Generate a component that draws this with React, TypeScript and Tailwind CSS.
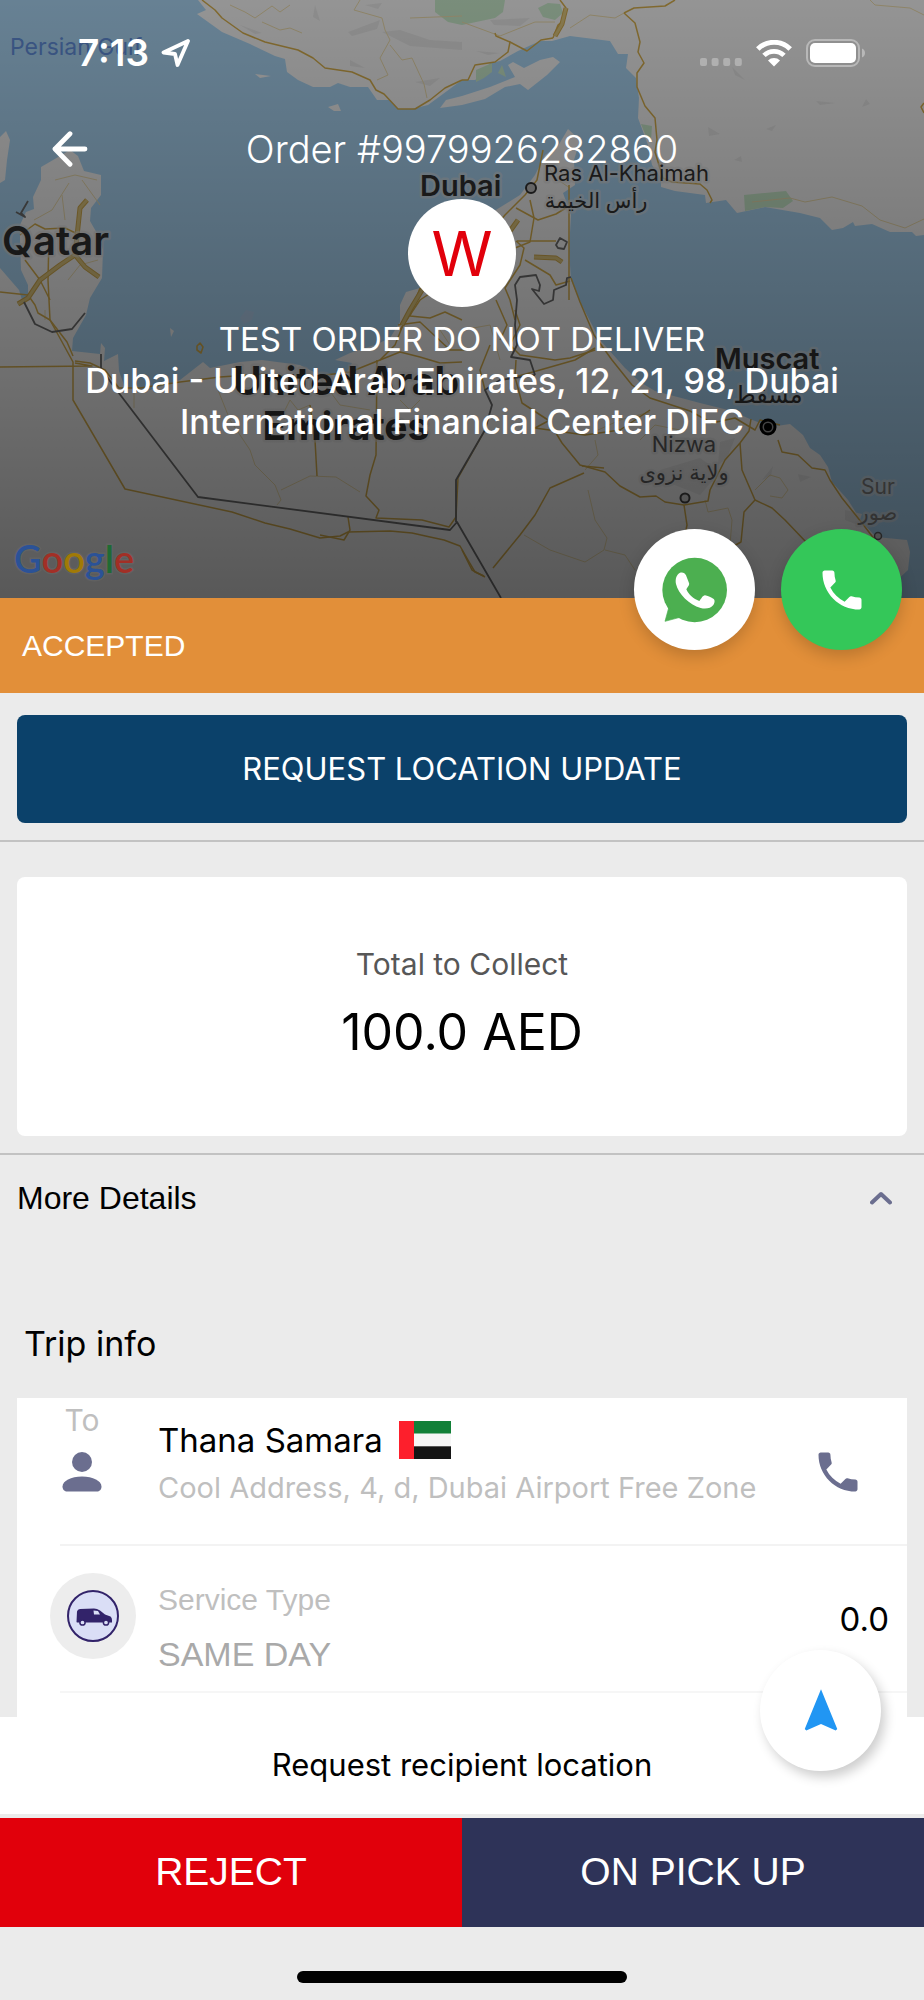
import React from "react";
import { MdPhone, MdNavigation } from "react-icons/md";

const sans = "font-['Inter','Noto_Sans',sans-serif]";
const helv = "font-['Liberation_Sans',Arial,sans-serif]";

const LAND = [
  // Iran and Pakistan coast
  "M198 0L206 10L197 14L222 32L250 44L275 56L285 59L287 72L298 80L313 87H330L338 83L350 87H368L377 100H390L398 109H412L428 105L462 80H475L483 75L490 63L500 61L518 51L540 41H552L570 36L610 41L618 54H628L626 68L636 78L639 98L638 118L648 145L652 165L661 178V187L675 191L705 195L706 203L726 200L737 213L765 207L800 213L820 218L832 230L843 228L853 222L855 226L872 224L890 232H912L916 236L924 235V0Z",
  "M462 96L490 87L515 77L508 65L513 62L524 68L540 60L553 57L560 62L547 75L528 90L520 84L505 87L485 99L462 105L440 108L446 100Z",
  "M255 74L271 76L260 78Z",
  "M328 107L338 104L341 111L334 111Z",
  "M0 137L6 131L10 140L7 160L5 180L0 183Z",
  // Arabian peninsula
  "M0 268L19 290L22 300H28L28 285L21 270L20 240L20 225L26 212L34 209L33 197L41 180V167L60 156L70 150L78 156L84 171L101 175V195L91 208L90 221L98 235L103 250L102 278L90 298L86 315L73 338L72 351L100 354L101 343L105 348L104 361L118 354L119 371L125 388L150 390L180 380L203 362L210 368L240 362L262 360L300 365L320 375L345 375L352 363L335 360L350 353L375 345L390 338L400 322V305L406 292L420 288L440 262L480 220L499 208L520 195L535 175L545 155L558 146L568 129L580 140L574 160L575 185L563 193L571 215L569 250L571 280L580 302L600 340L625 368L640 382L655 391L700 403L732 411L750 419L770 427L790 424L803 435L810 448L820 455L828 467L832 482L848 500L862 522L876 537L907 540L910 552L908 570L895 582V598H0Z",
];

const GREENS = [
  "M435 0V12L448 22L462 25L495 18L503 12L505 0Z",
  "M538 8L548 3L560 4L563 13L555 20L543 17Z",
  "M476 70L492 63V72L484 78L476 82Z",
  "M498 73L502 65L506 77Z",
  "M744 195L786 191L793 201L783 208L765 207L745 211Z",
  "M641 124L652 126L651 140L645 134Z",
];

const RELIEF = [
  "M365 5L382 3L378 9Z", "M382 32L400 30L430 40L462 42V50L410 46Z", "M348 32L380 20L377 29L352 36Z",
  "M315 5L320 21L313 17Z", "M240 25L262 33L255 34Z", "M350 60L365 68L350 66Z", "M490 20L530 18L520 26L494 25Z",
  "M476 51L500 53L488 55Z", "M732 67L745 80L735 75Z", "M816 101L836 103L820 105Z", "M862 107L866 99L870 104Z",
  "M708 127L720 134L709 136Z", "M766 129L776 125L772 131Z", "M734 160L741 156L742 162Z", "M720 442L735 438L727 458L718 465Z",
  "M660 470L700 458L720 472L700 495L662 480Z", "M762 480L773 466L771 476Z", "M798 474L811 477L800 482Z",
  "M845 510L862 514L858 525L845 520Z", "M415 82L440 78L430 86Z",
];

const ROADS = [
  "M202 0L215 10L222 18L243 33L265 42L298 50L313 58L325 68L352 72L370 80L376 90L384 94L398 109H415L430 100L445 88L462 80",
  "M462 80H468L475 65L495 62L508 52L510 42L496 36L495 33",
  "M510 42L527 51L541 40L553 38", "M560 0L566 8L564 20L558 25L553 38",
  "M624 13L635 23L640 42L638 52L644 63L637 73V87L645 106L655 118L657 140L655 152L663 178L672 182L700 184L707 190L712 200L710 203",
  "M624 13L634 8L665 6L675 0", "M924 103L921 107L924 113",
  "M0 292L28 295L35 305L38 313L50 320L73 362V400L125 489L232 512L265 523L290 529L320 538L340 536L348 532L390 531L412 533L430 537L444 540L460 546L468 560L475 572L484 576",
  "M0 367L92 366L75 363", "M75 361L90 363L105 370L119 388L140 388L180 382L220 377L262 374L300 378L350 372L380 360L400 352L420 357L440 363L462 362",
  "M49 235L48 280L50 320L67 342L73 356", "M310 405L315 440L317 476", "M377 360L376 455L370 475L366 496L379 510L376 518L422 520L449 527L456 517L458 478L485 430",
  "M348 517L350 530L344 540L320 535", "M420 288L410 316L430 318L445 312L462 320", "M398 325L420 322L450 350L470 350",
  "M420 290L405 320L395 345L380 360", "M543 150L537 180L525 195L505 215L480 245L450 280L420 300L400 330",
  "M569 185V300", "M530 200L534 218L530 242L515 248", "M517 241H556M516 241L524 248L520 265L505 288L510 300L515 320",
  "M516 208L538 220L556 214L569 206", "M525 260L550 275L556 285L570 281",
  "M571 278L580 302L594 335L612 360L632 385L650 398L690 411L712 423L735 418L755 430L760 420L780 425",
  "M516 360L515 377L540 370L575 360L595 348", "M515 377L522 403L548 420L562 443L580 465L605 472L620 486L640 497L656 496L665 502L684 505L708 501L710 490L725 460L740 443L749 431L751 419",
  "M550 420L535 428L585 435L620 430L650 410", "M584 473L550 488L535 515L520 535L493 568", "M582 466L604 468",
  "M684 505L687 525L683 545", "M740 443L742 470L755 500L744 512L741 542L730 548", "M755 500L772 508L785 520L806 542",
  "M778 440L782 452L798 455L812 468L825 470L830 480L842 498L862 523L875 540", "M462 550L472 570L485 577",
  "M515 310L520 325L510 345L520 355L555 360L570 358L595 350", "M496 300L507 325L500 340", "M490 345L480 370L485 390",
  "M20 235L35 224L45 229L65 228L90 240", "M25 260L40 280L50 300",
];

const HIGHWAYS = [
  "M87 200L80 208L75 255L60 265L40 280L28 298L18 304", "M75 255L85 267L99 277", "M425 285L410 310L402 325",
  "M534 257L556 258L562 262", "M566 8L562 24L555 36", "M518 220L500 245L480 270",
];

const MINOR = [
  "M230 5L245 12L255 18L272 6L280 12L290 5", "M262 22L280 30L290 28L302 33", "M360 0L354 10L382 18L385 30L390 40L380 58L388 75L377 80",
  "M390 45L402 60L412 58L424 84L427 98", "M410 18L462 16", "M570 28L590 15L615 18L624 13", "M462 22L500 36L535 22L555 22",
  "M752 202L790 198L805 202L832 197L862 206L880 220L905 228L924 219", "M870 0L875 5L910 8L924 15",
  "M218 390L230 420L250 450L255 465L275 485L281 500L277 505", "M281 490L310 476L336 477L360 492", "M310 405L298 410L290 400L280 420",
  "M55 180L75 175L97 180M69 183L52 210L34 220M62 195L65 220M82 180L100 205M45 310V320",
  "M524 535L550 550L585 562L604 550L607 538L595 520L588 490", "M605 550L625 555L635 570", "M595 440L598 455L585 470",
  "M598 430L620 420L650 412", "M640 440L655 425L680 430", "M705 500L708 512L728 508L732 520L730 545", "M755 490L770 475L780 478L788 490L782 498L770 496",
  "M134 388V408", "M68 280L80 265L98 260", "M320 378L340 405L370 410", "M420 400L410 410L400 400",
  "M462 330L490 325L500 360M440 330L450 345M545 160L555 178L570 188",
];

const BORDERS = [
  "M24 302L35 324L52 332L72 329L85 313", "M101 354V368L112 384L198 497L450 530L457 522L501 598", "M456 522V480L485 430L492 405L485 390L500 380L535 375",
  "M535 375L530 360L511 357L517 345L515 325L517 300L515 285L520 277L536 275L540 285L539 291L532 289L544 304L553 300L554 290L566 285L567 278L571 277",
  "M556 245L560 238L567 242L564 249L558 248Z", "M28 201L21 213L25 217L16 212",
];

function MapBackdrop() {
  return (
    <svg
      className="absolute inset-0 h-full w-full"
      viewBox="0 0 924 598"
      preserveAspectRatio="xMidYMid slice"
      aria-hidden="true"
    >
      <defs>
        <linearGradient id="shade" x1="0" y1="0" x2="0" y2="1">
          <stop offset="0" stopColor="#000" stopOpacity="0.38" />
          <stop offset="1" stopColor="#000" stopOpacity="0.63" />
        </linearGradient>
      </defs>
      <rect width="924" height="598" fill="#a6d0ee" />
      {LAND.map((d) => <path key={d} d={d} fill="#efefef" />)}
      {GREENS.map((d) => <path key={d} d={d} fill="#c4e4c6" />)}
      {RELIEF.map((d) => <path key={d} d={d} fill="#e2e2e2" />)}
      <path d="M240 318L246 310L254 312L252 320L244 324Z" fill="#b0cdea" />
      <path d="M170 328L174 331L171 337Z" fill="#efefef" />
      <g fill="none" strokeLinejoin="round">
        {MINOR.map((d) => <path key={d} d={d} stroke="#e6d6a8" strokeWidth="1" />)}
        {ROADS.map((d) => <path key={d} d={d} stroke="#d0aa4c" strokeWidth="1.5" />)}
        {HIGHWAYS.map((d) => <path key={d} d={d} stroke="#cba54a" strokeWidth="5" />)}
        {HIGHWAYS.map((d) => <path key={d} d={d} stroke="#d9c27c" strokeWidth="3" />)}
        <path d="M197 346L200 343L203 347L201 353L197 350Z" stroke="#d0aa4c" strokeWidth="1.6" />
        {BORDERS.map((d) => <path key={d} d={d} stroke="#6a6a6a" strokeWidth="1.8" />)}
      </g>
      <g className="font-['Inter','Noto_Sans','DejaVu_Sans',sans-serif]" fill="#303030" stroke="#dcdcdc" strokeOpacity="0.55" strokeWidth="5" strokeLinejoin="round" paintOrder="stroke">
        <text x="10" y="55" fontSize="23" fill="#5f8bd6" stroke="none">Persian Gulf</text>
        <text x="420" y="196" fontSize="29" fontWeight="600">Dubai</text>
        <text x="544" y="181" fontSize="22">Ras Al-Khaimah</text>
        <text x="596" y="208" fontSize="21" fontWeight="500" textAnchor="middle">رأس الخيمة</text>
        <text x="2" y="255" fontSize="40" fontWeight="600">Qatar</text>
        <text x="346" y="395" fontSize="39" fontWeight="700" textAnchor="middle">United Arab</text>
        <text x="346" y="440" fontSize="39" fontWeight="700" textAnchor="middle">Emirates</text>
        <text x="715" y="369" fontSize="29" fontWeight="600">Muscat</text>
        <text x="768" y="403" fontSize="24" fontWeight="500" textAnchor="middle">مسقط</text>
        <g fill="#585858">
          <text x="684" y="452" fontSize="22" textAnchor="middle">Nizwa</text>
          <text x="684" y="480" fontSize="21" textAnchor="middle">ولاية نزوى</text>
        </g>
        <g fill="#7c7c7c">
          <text x="878" y="494" fontSize="21" textAnchor="middle">Sur</text>
          <text x="878" y="520" fontSize="21" textAnchor="middle">صور</text>
        </g>
      </g>
      <circle cx="531" cy="188" r="5" fill="#bbb" stroke="#303030" strokeWidth="2" />
      <circle cx="685" cy="498" r="4.500" fill="#ccc" stroke="#404040" strokeWidth="2" />
      <circle cx="878" cy="536" r="3.500" fill="#ccc" stroke="#606060" strokeWidth="1.500" />
      <circle cx="768" cy="427" r="7" fill="#999" stroke="#000" strokeWidth="3" />
      <circle cx="768" cy="427" r="4" fill="#000" />
      <rect width="924" height="598" fill="url(#shade)" />
      <text x="14" y="573" fontSize="38" fontWeight="600" className="font-['Lato','Inter',sans-serif]" stroke="#6c6c6c" strokeOpacity="0.4" strokeWidth="3" paintOrder="stroke">
        <tspan fill="#2b5297">G</tspan>
        <tspan fill="#a22f26">o</tspan>
        <tspan fill="#a17a06">o</tspan>
        <tspan fill="#2b5297">g</tspan>
        <tspan fill="#1f6b34">l</tspan>
        <tspan fill="#a22f26">e</tspan>
      </text>
    </svg>
  );
}

function StatusBar() {
  return (
    <div className="flex h-[42px] items-center justify-between pr-[58px] pl-[78px] text-white">
      <div className="flex items-center gap-3">
        <span className="text-[37px] leading-[42px] font-semibold">7:13</span>
        <svg width="30" height="30" viewBox="0 0 30 30" fill="none" stroke="currentColor" strokeWidth="3.800" strokeLinejoin="round" aria-hidden="true">
          <path d="M27 3L2.500 14.500L14 16L16.500 27Z" />
        </svg>
      </div>
      <div className="flex items-center" aria-hidden="true">
        <svg className="mt-[18px]" width="42" height="8" viewBox="0 0 42 8" fill="#b0b0b0">
          <rect x="0" width="7" height="8" rx="2" />
          <rect x="11.600" width="7" height="8" rx="2" />
          <rect x="23.200" width="7" height="8" rx="2" />
          <rect x="34.800" width="7" height="8" rx="2" />
        </svg>
        <svg className="ml-[14px]" width="36" height="27" viewBox="0 0 36 27" fill="none" stroke="#fff">
          <path d="M1.800 9A23 23 0 0 1 34.200 9" strokeWidth="5" />
          <path d="M8 15.400A14.200 14.200 0 0 1 28 15.400" strokeWidth="4.800" />
          <path d="M18 26.500L12 20.500A8.500 8.500 0 0 1 24 20.500Z" fill="#fff" stroke="none" />
        </svg>
        <svg className="ml-[14px]" width="60" height="28" viewBox="0 0 60 28">
          <rect x="1" y="1" width="52" height="26" rx="8" fill="none" stroke="#b8b8b8" strokeWidth="2" />
          <rect x="4" y="4" width="46" height="20" rx="5" fill="#fff" />
          <path d="M56 9.500C60 11 60 17 56 18.500Z" fill="#b8b8b8" />
        </svg>
      </div>
    </div>
  );
}

function WhatsAppIcon() {
  return (
    <svg width="66" height="66" viewBox="601 769 198 198" aria-hidden="true">
      <circle cx="699" cy="868" r="97" fill="#4caf50" />
      <path d="M610 962L622 918L655 950Z" fill="#4caf50" stroke="#4caf50" strokeWidth="2" />
      <path d="M655 816C664 814 670 817 673 824L682 847C685 853 676 861 674 866C681 882 695 895 713 901C718 896 723 884 730 884C737 885 747 890 755 894C761 898 759 906 755 913C748 923 732 926 717 922C682 912 650 880 643 850C640 834 645 821 655 816Z" fill="#fff" />
    </svg>
  );
}

function PersonIcon() {
  return (
    <svg width="40" height="40" viewBox="0 0 40 40" fill="#6b6e8f" aria-hidden="true">
      <circle cx="20" cy="10" r="10" />
      <path d="M5 39.500C2 39.500 0.500 37 0.500 34.500C0.500 29 9 24.500 20 24.500S39.500 29 39.500 34.500C39.500 37 38 39.500 35 39.500Z" />
    </svg>
  );
}

function UaeFlag() {
  return (
    <svg width="52" height="38" viewBox="0 0 52 38" role="img" aria-label="United Arab Emirates">
      <rect width="52" height="13" fill="#128038" />
      <rect y="12.500" width="52" height="13" fill="#f6f6f6" />
      <rect y="25.300" width="52" height="12.700" fill="#151515" />
      <rect width="15" height="38" fill="#fd1f2c" />
    </svg>
  );
}

function VanBadge() {
  return (
    <span className="flex size-[86px] items-center justify-center rounded-full bg-[#ededed]">
      <svg width="52" height="52" viewBox="0 0 52 52" aria-hidden="true">
        <circle cx="26" cy="26" r="25" fill="#dadef6" stroke="#32236a" strokeWidth="2" />
        <path d="M9.500 32L10 21.500Q10.500 19 13 19L27 18.500Q30 18.500 33 20.500L38 24.500L43.500 26.500Q45 27.500 45 30V32.500H10Z" fill="#32236a" />
        <path d="M26.500 20.500L31 21L33 24.500H27Z" fill="#dadef6" />
        <circle cx="15.500" cy="32.500" r="2.600" fill="#dadef6" stroke="#32236a" strokeWidth="1.500" />
        <circle cx="39" cy="32.500" r="2.600" fill="#dadef6" stroke="#32236a" strokeWidth="1.500" />
      </svg>
    </span>
  );
}

export default function App() {
  return (
    <div className={`flex min-h-screen flex-col bg-[#ebebeb] text-black ${sans}`}>
      <header className="relative">
        <MapBackdrop />
        <div className="relative pt-8 pb-[156px] text-white">
          <StatusBar />
          <div className="mt-[51px] grid grid-cols-[88px_1fr_88px] items-center">
            <button type="button" aria-label="Back" className="justify-self-end">
              <svg width="36" height="36" viewBox="0 0 36 36" fill="none" stroke="currentColor" strokeWidth="4.800" strokeLinecap="round" strokeLinejoin="round" aria-hidden="true">
                <path d="M33 18H3M18 2.800L3 18L18 33.200" />
              </svg>
            </button>
            <h1 className="text-center text-[38px] leading-[48px] font-light">Order #9979926282860</h1>
          </div>
          <div className="mx-auto mt-[26px] flex size-[108px] items-center justify-center rounded-full bg-white text-[62px] text-[#e1000b]">
            W
          </div>
          <div className="mt-3 px-20 text-center leading-[41px]">
            <p className="text-[33px] leading-[41px]">TEST ORDER DO NOT DELIVER</p>
            <p className="text-[34px] leading-[41px] font-medium">
              Dubai - United Arab Emirates, 12, 21, 98, Dubai International Financial Center DIFC
            </p>
          </div>
        </div>
        <div className="absolute right-[22px] -bottom-[52px] z-10 flex gap-[26px]">
          <button type="button" aria-label="WhatsApp" className="flex size-[121px] items-center justify-center rounded-full bg-white shadow-[0_6px_16px_rgba(0,0,0,0.18)]">
            <WhatsAppIcon />
          </button>
          <button type="button" aria-label="Call" className="flex size-[121px] items-center justify-center rounded-full bg-[#34c759] text-white shadow-[0_6px_16px_rgba(0,0,0,0.18)]">
            <MdPhone size={52} />
          </button>
        </div>
      </header>

      <div className={`flex h-[95px] items-center bg-[#e28f39] px-[22px] text-[30px] text-white ${helv}`}>ACCEPTED</div>

      <section className="border-b-2 border-[#c2c2c2] px-[17px] pt-[22px] pb-[17px]">
        <button type="button" className="h-[108px] w-full rounded-lg bg-[#0b416a] text-[31px] text-white">
          REQUEST LOCATION UPDATE
        </button>
      </section>

      <section className="border-b-2 border-[#c2c2c2] px-[17px] pt-[35px] pb-[17px]">
        <div className="flex h-[259px] flex-col items-center rounded-lg bg-white pt-[69px]">
          <p className="text-[30px] leading-9 text-[#575757]">Total to Collect</p>
          <p className="mt-5 text-[50px] leading-[60px]">100.0 AED</p>
        </div>
      </section>

      <button type="button" aria-expanded="true" className={`flex h-[86px] items-center justify-between pr-8 pl-[17px] text-left text-[32px] ${helv}`}>
        More Details
        <svg width="22" height="14" viewBox="0 0 22 14" fill="none" stroke="#6b6e8f" strokeWidth="4" strokeLinecap="round" strokeLinejoin="round" aria-hidden="true">
          <path d="M2 11.500L11 3L20 11.500" />
        </svg>
      </button>

      <h2 className="mt-[81px] mb-8 px-6 text-[34px] leading-[44px]">Trip info</h2>

      <section className="mx-[17px] flex-1 bg-white pl-[43px]">
        <div className="flex h-[148px] items-start border-b-2 border-[#f3f3f3] pr-[43px]">
          <div className="flex w-[98px] shrink-0">
            <div className="flex w-11 flex-col items-center pt-1">
              <span className="text-[30px] leading-9 text-[#bfbfbf]">To</span>
              <span className="mt-[14px]"><PersonIcon /></span>
            </div>
          </div>
          <div className="flex-1 pt-[22px]">
            <p className="flex items-center gap-4 text-[33px] leading-10">
              Thana Samara
              <UaeFlag />
            </p>
            <p className="mt-[10px] text-[29px] leading-9 text-[#bfbfbf]">Cool Address, 4, d, Dubai Airport Free Zone</p>
          </div>
          <button type="button" aria-label="Call recipient" className="mt-12 text-[#6b6e8f]">
            <MdPhone size={52} />
          </button>
        </div>
        <div className="flex h-[147px] items-start border-b-2 border-[#f6f6f6] pr-[18px]">
          <div className="w-[98px] shrink-0 pt-[27px]">
            <div className="-ml-[10px]"><VanBadge /></div>
          </div>
          <div className={`flex-1 pt-9 ${helv}`}>
            <p className="text-[30px] leading-9 text-[#bfbfbf]">Service Type</p>
            <p className="mt-4 text-[34px] leading-10 text-[#a9a9a9]">SAME DAY</p>
          </div>
          <p className="mt-[51px] text-[33px] leading-[44px]">0.0</p>
        </div>
      </section>

      <footer className="sticky bottom-0 bg-[#ebebeb]">
        <button type="button" aria-label="Navigate" className="absolute -top-[67px] right-[43px] z-10 flex size-[121px] items-center justify-center rounded-full bg-white text-[#2196f3] shadow-[4px_6px_12px_rgba(0,0,0,0.2)]">
          <MdNavigation size={52} />
        </button>
        <button type="button" className="h-[97px] w-full bg-white text-[31px]">Request recipient location</button>
        <div className={`mt-1 grid h-[109px] grid-cols-2 text-[39px] text-white ${helv}`}>
          <button type="button" className="bg-[#e1000b]">REJECT</button>
          <button type="button" className="bg-[#2e3358]">ON PICK UP</button>
        </div>
        <div className="flex justify-center pt-11 pb-[17px]">
          <span className="h-3 w-[330px] rounded-full bg-black" />
        </div>
      </footer>
    </div>
  );
}
